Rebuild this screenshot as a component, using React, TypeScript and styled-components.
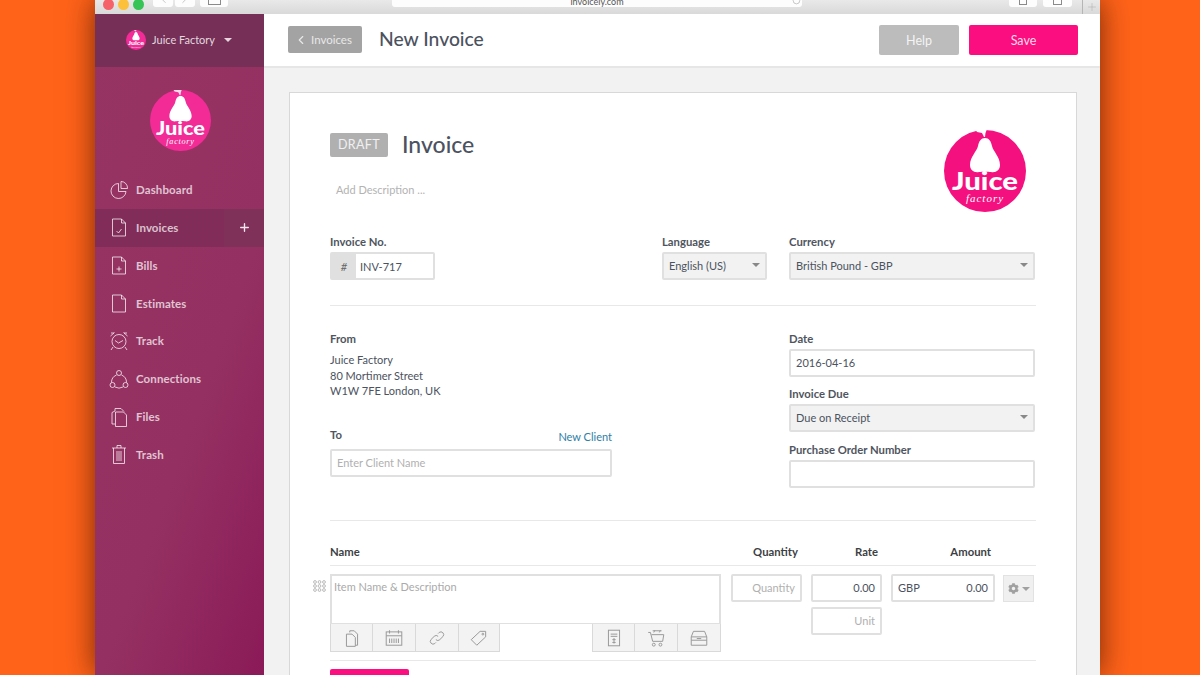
import type { ReactNode } from 'react';
import styled, { createGlobalStyle } from 'styled-components';
import { ChevronLeft, ChevronRight, Plus, RotateCw } from 'lucide-react';
import { FaCog } from 'react-icons/fa';

const GlobalStyle = createGlobalStyle`
  html, body {
    margin: 0;
    height: 675px;
    overflow: hidden;
    background: #ff6319;
    font-family: Lato, "Liberation Sans", sans-serif;
    color: #4b5260;
  }
  * { box-sizing: border-box; }
`;

const Window = styled.div`
  width: 1005px;
  height: 675px;
  margin-left: 95px;
  display: flex;
  flex-direction: column;
  overflow: hidden;
  background: #f2f2f2;
  box-shadow: 0 0 28px rgba(70, 20, 0, 0.75);
`;

const Chrome = styled.div`
  flex: none;
  height: 14px;
  padding: 0 0 7px 8px;
  display: flex;
  align-items: flex-end;
  overflow: visible;
  background: linear-gradient(#e9e9e9, #d9d9d9);
`;

const Lights = styled.div`
  display: flex;
  gap: 4px;
  margin-right: 9px;
  margin-bottom: -3px;
`;

const Light = styled.span<{ $color: string }>`
  width: 11px;
  height: 11px;
  border-radius: 50%;
  background: ${(p) => p.$color};
`;

const ChromeButton = styled.div<{ $width: number; $gap?: number }>`
  flex: none;
  width: ${(p) => p.$width}px;
  height: 20px;
  margin-right: ${(p) => p.$gap ?? 0}px;
  display: flex;
  align-items: flex-end;
  justify-content: center;
  border-radius: 3px;
  background: #fdfdfd;
  color: #b5b5b5;
`;

const ChromeGlyph = styled.span<{ $width: number }>`
  display: block;
  width: ${(p) => p.$width}px;
  height: 10px;
  margin-bottom: 2px;
  border: 1px solid #8a8a8a;
`;

const UrlBar = styled.div`
  position: relative;
  flex: none;
  width: 410px;
  height: 20px;
  margin: 0 207px 0 164px;
  display: flex;
  align-items: flex-end;
  justify-content: center;
  padding-bottom: 1px;
  background: #fdfdfd;
  border-radius: 3px;
  font-size: 9px;
  line-height: 9px;
  color: #555;
`;

const Reload = styled.span`
  position: absolute;
  right: 1px;
  bottom: 2px;
  display: flex;
  color: #888;
`;

const NewTab = styled.div`
  flex: none;
  width: 18px;
  height: 14px;
  margin: 0 0 -7px 10px;
  display: flex;
  align-items: center;
  justify-content: center;
  border-left: 1px solid #b5b5b5;
  color: #aaa;
`;

const Body = styled.div`
  flex: 1;
  min-height: 0;
  display: flex;
`;

const Sidebar = styled.aside`
  flex: none;
  width: 169px;
  display: flex;
  flex-direction: column;
  background: linear-gradient(110deg, #963463 0%, #953162 60%, #8a1a58 100%);
  color: rgba(255, 255, 255, 0.72);
`;

const Account = styled.div`
  flex: none;
  height: 53px;
  padding: 0 0 2px 31px;
  display: flex;
  align-items: center;
  gap: 6px;
  background: #763058;
  font-size: 11px;
  color: rgba(255, 255, 255, 0.82);
`;

const AccountLogo = styled.div`
  flex: none;
  width: 20px;
  height: 20px;
`;

const Caret = styled.span<{ $color?: string; $left?: number }>`
  flex: none;
  width: 0;
  height: 0;
  margin-left: ${(p) => p.$left ?? 0}px;
  border-left: 4px solid transparent;
  border-right: 4px solid transparent;
  border-top: 4px solid ${(p) => p.$color ?? '#e8d5df'};
`;

const SideLogo = styled.div`
  flex: none;
  height: 104px;
  padding: 23px 0 0 55px;
`;

const SideLogoMark = styled.div`
  width: 61px;
  height: 61px;
`;

const Nav = styled.nav`
  display: flex;
  flex-direction: column;
`;

const NavRow = styled.div<{ $active?: boolean }>`
  height: 37.86px;
  padding: 0 0 1px 14px;
  display: flex;
  align-items: center;
  font-size: 11.5px;
  font-weight: 700;
  letter-spacing: 0.1px;
  background: ${(p) => (p.$active ? 'rgba(110, 40, 80, 0.5)' : 'transparent')};
`;

const NavIcon = styled.svg`
  flex: none;
  width: 20px;
  height: 22px;
  margin-right: 7px;
  fill: none;
  stroke: rgba(255, 255, 255, 0.72);
  stroke-width: 1;
`;

const NavAdd = styled.span`
  width: 40px;
  height: 38px;
  margin: 0 0 -1px auto;
  display: flex;
  align-items: center;
  justify-content: center;
  background: #7f3159;
  color: #f3e6ec;
`;

const Main = styled.main`
  flex: 1;
  min-width: 0;
  display: flex;
  flex-direction: column;
`;

const TopBar = styled.header`
  flex: none;
  height: 54px;
  padding: 0 22px 1px 24px;
  display: flex;
  align-items: center;
  background: #fff;
  border-bottom: 2px solid #e6e6e6;
`;

const BackButton = styled.div`
  width: 74px;
  height: 27px;
  margin-right: 17px;
  display: flex;
  align-items: center;
  padding-left: 6px;
  gap: 3px;
  background: #a3a3a3;
  border-radius: 2px;
  font-size: 11.5px;
  color: #e8e8e8;
`;

const PageTitle = styled.h1`
  margin: 0;
  padding-bottom: 3px;
  font-size: 19.3px;
  font-weight: 500;
  color: #4b5260;
`;

const ActionButton = styled.div<{ $color: string; $width: number; $left: string }>`
  width: ${(p) => p.$width}px;
  height: 30px;
  margin-left: ${(p) => p.$left};
  padding-top: 1px;
  display: flex;
  align-items: center;
  justify-content: center;
  background: ${(p) => p.$color};
  border-radius: 2px;
  font-size: 12.5px;
  color: rgba(255, 255, 255, 0.85);
`;

const Card = styled.section`
  flex: none;
  width: 788px;
  margin: 24px 0 0 25px;
  padding: 40px 40px 0;
  background: #fff;
  border: 1px solid #d8d8d8;
  border-bottom: 0;
`;

const TitleRow = styled.div`
  height: 102px;
  display: flex;
  justify-content: space-between;
`;

const TitleGroup = styled.div`
  display: flex;
  align-items: flex-start;
  gap: 14px;
`;

const Draft = styled.span`
  width: 58px;
  height: 24px;
  padding-bottom: 1px;
  display: flex;
  align-items: center;
  justify-content: center;
  background: #b0b0b0;
  border-radius: 2px;
  font-size: 12.5px;
  letter-spacing: 0.4px;
  color: #f0f0f0;
`;

const InvoiceTitle = styled.h2`
  margin: 0;
  font-size: 23px;
  font-weight: 500;
  line-height: 22px;
  color: #4b5260;
`;

const Description = styled.div`
  margin: 26px 0 0 6px;
  font-size: 11px;
  color: #b3b3b3;
`;

const HeadLogo = styled.div`
  width: 82px;
  height: 82px;
  margin: -3px 10px 0 0;
`;

const Row = styled.div`
  display: flex;
  align-items: flex-start;
  padding-right: 1px;
`;

const Field = styled.div<{ $width: number; $left?: string }>`
  width: ${(p) => p.$width}px;
  margin-left: ${(p) => p.$left ?? '0'};
`;

const Label = styled.div`
  height: 14px;
  margin-bottom: 3px;
  font-size: 11.3px;
  font-weight: 700;
  line-height: 14px;
  color: #4f5560;
`;

const Box = styled.div<{ $select?: boolean; $align?: string; $muted?: boolean }>`
  height: 28px;
  padding: 0 5px 2px;
  display: flex;
  align-items: center;
  justify-content: ${(p) => p.$align ?? 'space-between'};
  background: ${(p) => (p.$select ? '#f2f2f2' : '#fff')};
  border: 2px solid #e0e0e0;
  border-radius: 2px;
  font-size: 11px;
  color: ${(p) => (p.$muted ? '#b0b0b0' : '#4b5260')};
`;

const PrefixBox = styled(Box)`
  padding: 0 4px 0 0;
  justify-content: flex-start;
`;

const Hash = styled.span`
  align-self: stretch;
  width: 24px;
  margin-right: 4px;
  display: flex;
  align-items: center;
  justify-content: center;
  background: #e0e0e0;
  font-style: italic;
  color: #666;
`;

const Divider = styled.hr<{ $top: number; $bottom: number }>`
  margin: ${(p) => p.$top}px 0 ${(p) => p.$bottom}px;
  border: 0;
  border-top: 1px solid #e8e8e8;
`;

const Parties = styled.div`
  display: flex;
  justify-content: space-between;
  padding-right: 1px;
`;

const LeftColumn = styled.div`
  width: 282px;
`;

const RightColumn = styled.div`
  width: 246px;
  display: flex;
  flex-direction: column;
  gap: 10px;
  & > :last-child { margin-top: 1px; }
`;

const Address = styled.div`
  margin: 6px 0 29.5px;
  font-size: 11px;
  line-height: 15.5px;
  color: #4b5260;
`;

const ToRow = styled.div`
  height: 21px;
  display: flex;
  align-items: flex-start;
  justify-content: space-between;
`;

const ToLabel = styled(Label)`
  margin: 0;
`;

const NewClient = styled.span`
  font-size: 11px;
  line-height: 18px;
  color: #2f7ea6;
`;

const ItemGrid = styled.div`
  display: grid;
  grid-template-columns: 392px 71px 71px 104px 30px;
  column-gap: 9px;
`;

const HeadCell = styled.div<{ $right?: boolean }>`
  padding-right: ${(p) => (p.$right ? 4 : 0)}px;
  font-size: 11.3px;
  font-weight: 700;
  line-height: 14px;
  text-align: ${(p) => (p.$right ? 'right' : 'left')};
  color: #3d3f44;
`;

const NameCell = styled.div`
  position: relative;
  width: 391px;
`;

const Handle = styled.svg`
  position: absolute;
  left: -17px;
  top: 6px;
  width: 13px;
  height: 12px;
  fill: none;
  stroke: #aaa;
  stroke-width: 0.8;
`;

const NameBox = styled.div`
  height: 50px;
  padding: 4px 2px;
  border: 2px solid #e0e0e0;
  border-bottom-width: 1px;
  font-size: 11px;
  color: #aaa;
`;

const Tools = styled.div`
  height: 28px;
  display: flex;
  justify-content: space-between;
`;

const ToolGroup = styled.div`
  display: flex;
`;

const Tool = styled.div<{ $width?: number }>`
  width: ${(p) => p.$width ?? 43}px;
  display: flex;
  align-items: center;
  justify-content: center;
  background: #f3f3f3;
  border: 1px solid #d9d9d9;
  border-top: 0;
  border-left-width: 0;
  &:first-child { border-left-width: 1px; }
`;

const ToolIcon = styled.svg`
  width: 20px;
  height: 20px;
  fill: none;
  stroke: #9a9a9a;
  stroke-width: 0.9;
`;

const RateStack = styled.div`
  display: flex;
  flex-direction: column;
  gap: 5px;
`;

const GearButton = styled.div`
  height: 27px;
  margin: 1px 0 0 -1px;
  display: flex;
  align-items: center;
  justify-content: center;
  gap: 3px;
  background: #f0f0f0;
  border: 1px solid #e2e2e2;
  color: #a0a0a0;
`;

const AddLine = styled.div`
  width: 79px;
  height: 30px;
  background: #fb0f80;
  border-radius: 2px;
`;

const LogoSvg = styled.svg`
  display: block;
  width: 100%;
  height: 100%;
`;

const Logo = ({ color, stem }: { color: string; stem: string }) => (
  <LogoSvg viewBox="0 0 82 82">
    <circle cx="41" cy="41" r="41" fill={color} />
    <path d="M31 -1L33 2L38 3L40 7L41 7L41.500 3L43 -1Z" fill={stem} />
    <path
      d="M41 8C37 8 35 11 34 16C33 21 26 27 26 35C26 40 30 43 35 42C38 41.500 44 41.500 47 42C52 43 56 40 56 35C56 27 49 21 48 16C47 11 45 8 41 8Z"
      fill="#fff"
    />
    <text
      x="41"
      y="60"
      textAnchor="middle"
      textLength="66"
      lengthAdjust="spacingAndGlyphs"
      fontFamily="Lato, sans-serif"
      fontWeight="900"
      fontSize="25"
      fill="#fff"
    >
      Juice
    </text>
    <text
      x="41"
      y="72"
      textAnchor="middle"
      fontFamily='"Liberation Serif", serif'
      fontStyle="italic"
      fontSize="11"
      letterSpacing="1"
      fill="#fff"
    >
      factory
    </text>
  </LogoSvg>
);

const navItems: { label: string; active?: boolean; icon: ReactNode }[] = [
  {
    label: 'Dashboard',
    icon: (
      <>
        <path d="M9.500 5.500a7.500 7.500 0 1 0 7.500 8H9.500z" />
        <path d="M12 3.500a6.500 6.500 0 0 1 6.500 7H12z" />
      </>
    ),
  },
  {
    label: 'Invoices',
    active: true,
    icon: (
      <>
        <path d="M3.500 3h9l4 4v13h-13z" />
        <path d="M12.500 3v4h4" />
        <path d="M7.500 15l2 2 3-4" />
      </>
    ),
  },
  {
    label: 'Bills',
    icon: (
      <>
        <path d="M3.500 3h9l4 4v13h-13z" />
        <path d="M12.500 3v4h4" />
        <path d="M10 12.500v5M7.500 15h5" />
      </>
    ),
  },
  {
    label: 'Estimates',
    icon: (
      <>
        <path d="M3.500 3h9l4 4v13h-13z" />
        <path d="M12.500 3v4h4" />
      </>
    ),
  },
  {
    label: 'Track',
    icon: (
      <>
        <circle cx="10" cy="11.500" r="7" />
        <path d="M6 10.500l3.500 2.500 4.500-2.500" />
        <path d="M1.500 6l4-3.500M18.500 6l-4-3.500M2 3h3M15 3h3M4 17l-2 3M16 17l2 3" />
      </>
    ),
  },
  {
    label: 'Connections',
    icon: (
      <>
        <circle cx="10" cy="5" r="2.500" />
        <circle cx="3.500" cy="17" r="2.500" />
        <circle cx="16.500" cy="17" r="2.500" />
        <path d="M7.500 7a8 8 0 0 0-5 7.500M12.500 7a8 8 0 0 1 5 7.500M6 19a8 8 0 0 0 8 0" />
      </>
    ),
  },
  {
    label: 'Files',
    icon: (
      <>
        <path d="M6 5V2.500h6l3 3" />
        <path d="M3 18V6.500l3-1.500" />
        <path d="M6.500 6h8l3 3v11.500h-11z" />
        <path d="M3 18h3" />
      </>
    ),
  },
  {
    label: 'Trash',
    icon: (
      <>
        <path d="M3 5h14M8 5V2.500h4V5" />
        <path d="M4.500 5v15.500h11V5" />
        <path d="M8 8v10M10 8v10M12 8v10" />
      </>
    ),
  },
];

const leftTools: ReactNode[] = [
  <>
    <path d="M7 4V2.500h4l3 3v10h-2" />
    <path d="M4 5.500h5l3 3v8H4z" />
  </>,
  <>
    <rect x="2" y="3.500" width="14" height="12" />
    <path d="M2 7h14M5 2v3M13 2v3M5 9.500v4M7 9.500v4M9 9.500v4M11 9.500v4M13 9.500v4" />
  </>,
  <>
    <path d="M8 10.500a2.500 2.500 0 0 0 3.500 0l3-3a2.500 2.500 0 0 0-3.500-3.500l-1 1" />
    <path d="M10 7.500a2.500 2.500 0 0 0-3.500 0l-3 3a2.500 2.500 0 0 0 3.500 3.500l1-1" />
  </>,
  <>
    <path d="M10 3h5v5l-8 7.500-5-5z" />
    <circle cx="12.500" cy="5.500" r="0.800" />
  </>,
];

const rightTools: ReactNode[] = [
  <>
    <rect x="4" y="2" width="10" height="14" />
    <path d="M6 5.500h6M6 7.500h6M9 9v5M7.500 10.500h3M7.500 13h3" />
  </>,
  <>
    <path d="M2 4h2l2 8h9l1-6H5" />
    <path d="M6 2.500h8M7 4l1-2M12 4l1-2" />
    <circle cx="7" cy="15" r="1.300" />
    <circle cx="13" cy="15" r="1.300" />
  </>,
  <>
    <path d="M4 3h10l2 5v7.500H2V8z" />
    <path d="M2 8h14M2 11h14M7 9.500h4" />
  </>,
];

const dots = [2, 6.500, 11].flatMap((x) => [2, 6, 10].map((y) => [x, y]));

const App = () => (
  <>
    <GlobalStyle />
    <Window>
      <Chrome>
        <Lights>
          <Light $color="#f6626a" />
          <Light $color="#fdc03a" />
          <Light $color="#35c455" />
        </Lights>
        <ChromeButton $width={20} $gap={2}>
          <ChevronLeft size={18} strokeWidth={1} />
        </ChromeButton>
        <ChromeButton $width={20} $gap={5}>
          <ChevronRight size={18} strokeWidth={1} />
        </ChromeButton>
        <ChromeButton $width={28}>
          <ChromeGlyph $width={13} />
        </ChromeButton>
        <UrlBar>
          invoicely.com
          <Reload>
            <RotateCw size={9} strokeWidth={1.2} />
          </Reload>
        </UrlBar>
        <ChromeButton $width={28} $gap={6}>
          <ChromeGlyph $width={8} />
        </ChromeButton>
        <ChromeButton $width={29}>
          <ChromeGlyph $width={9} />
        </ChromeButton>
        <NewTab>
          <Plus size={12} strokeWidth={1} />
        </NewTab>
      </Chrome>
      <Body>
        <Sidebar>
          <Account>
            <AccountLogo>
              <Logo color="#f32b97" stem="#f6dbe8" />
            </AccountLogo>
            <span>Juice Factory</span>
            <Caret $left={3} />
          </Account>
          <SideLogo>
            <SideLogoMark>
              <Logo color="#f32b97" stem="#f6dbe8" />
            </SideLogoMark>
          </SideLogo>
          <Nav>
            {navItems.map((item) => (
              <NavRow $active={item.active} key={item.label}>
                <NavIcon viewBox="0 0 20 22">{item.icon}</NavIcon>
                {item.label}
                {item.active && (
                  <NavAdd>
                    <Plus size={13} strokeWidth={2.5} />
                  </NavAdd>
                )}
              </NavRow>
            ))}
          </Nav>
        </Sidebar>
        <Main>
          <TopBar>
            <BackButton>
              <ChevronLeft size={14} strokeWidth={2} />
              Invoices
            </BackButton>
            <PageTitle>New Invoice</PageTitle>
            <ActionButton $color="#bcbcbc" $width={80} $left="auto">
              Help
            </ActionButton>
            <ActionButton $color="#fb0f80" $width={109} $left="10px">
              Save
            </ActionButton>
          </TopBar>
          <Card>
            <TitleRow>
              <div>
                <TitleGroup>
                  <Draft>DRAFT</Draft>
                  <InvoiceTitle>Invoice</InvoiceTitle>
                </TitleGroup>
                <Description>Add Description ...</Description>
              </div>
              <HeadLogo>
                <Logo color="#f5107f" stem="#fff" />
              </HeadLogo>
            </TitleRow>
            <Row>
              <Field $width={105}>
                <Label>Invoice No.</Label>
                <PrefixBox>
                  <Hash>#</Hash>
                  INV-717
                </PrefixBox>
              </Field>
              <Field $width={105} $left="auto">
                <Label>Language</Label>
                <Box $select>
                  English (US)
                  <Caret $color="#888" />
                </Box>
              </Field>
              <Field $width={246} $left="22px">
                <Label>Currency</Label>
                <Box $select>
                  British Pound - GBP
                  <Caret $color="#888" />
                </Box>
              </Field>
            </Row>
            <Divider $top={25} $bottom={26} />
            <Parties>
              <LeftColumn>
                <Label>From</Label>
                <Address>
                  Juice Factory
                  <br />
                  80 Mortimer Street
                  <br />
                  W1W 7FE London, UK
                </Address>
                <ToRow>
                  <ToLabel>To</ToLabel>
                  <NewClient>New Client</NewClient>
                </ToRow>
                <Box $muted>Enter Client Name</Box>
              </LeftColumn>
              <RightColumn>
                <Field $width={246}>
                  <Label>Date</Label>
                  <Box>2016-04-16</Box>
                </Field>
                <Field $width={246}>
                  <Label>Invoice Due</Label>
                  <Box $select>
                    Due on Receipt
                    <Caret $color="#888" />
                  </Box>
                </Field>
                <Field $width={246}>
                  <Label>Purchase Order Number</Label>
                  <Box />
                </Field>
              </RightColumn>
            </Parties>
            <Divider $top={32} $bottom={24} />
            <ItemGrid>
              <HeadCell>Name</HeadCell>
              <HeadCell $right>Quantity</HeadCell>
              <HeadCell $right>Rate</HeadCell>
              <HeadCell $right>Amount</HeadCell>
              <span />
            </ItemGrid>
            <Divider $top={6} $bottom={8} />
            <ItemGrid>
              <NameCell>
                <Handle viewBox="0 0 13 12">
                  {dots.map(([x, y]) => (
                    <circle cx={x} cy={y} r="1.400" key={`${x}-${y}`} />
                  ))}
                </Handle>
                <NameBox>Item Name &amp; Description</NameBox>
                <Tools>
                  <ToolGroup>
                    {leftTools.map((icon, i) => (
                      <Tool $width={i === 3 ? 41 : 43} key={i}>
                        <ToolIcon viewBox="0 0 18 18">{icon}</ToolIcon>
                      </Tool>
                    ))}
                  </ToolGroup>
                  <ToolGroup>
                    {rightTools.map((icon, i) => (
                      <Tool key={i}>
                        <ToolIcon viewBox="0 0 18 18">{icon}</ToolIcon>
                      </Tool>
                    ))}
                  </ToolGroup>
                </Tools>
              </NameCell>
              <Box $align="flex-end" $muted>
                Quantity
              </Box>
              <RateStack>
                <Box $align="flex-end">0.00</Box>
                <Box $align="flex-end" $muted>
                  Unit
                </Box>
              </RateStack>
              <Box>
                <span>GBP</span>
                0.00
              </Box>
              <GearButton>
                <FaCog size={11} />
                <Caret $color="#a0a0a0" />
              </GearButton>
            </ItemGrid>
            <Divider $top={8} $bottom={8} />
            <AddLine />
          </Card>
        </Main>
      </Body>
    </Window>
  </>
);

export default App;
